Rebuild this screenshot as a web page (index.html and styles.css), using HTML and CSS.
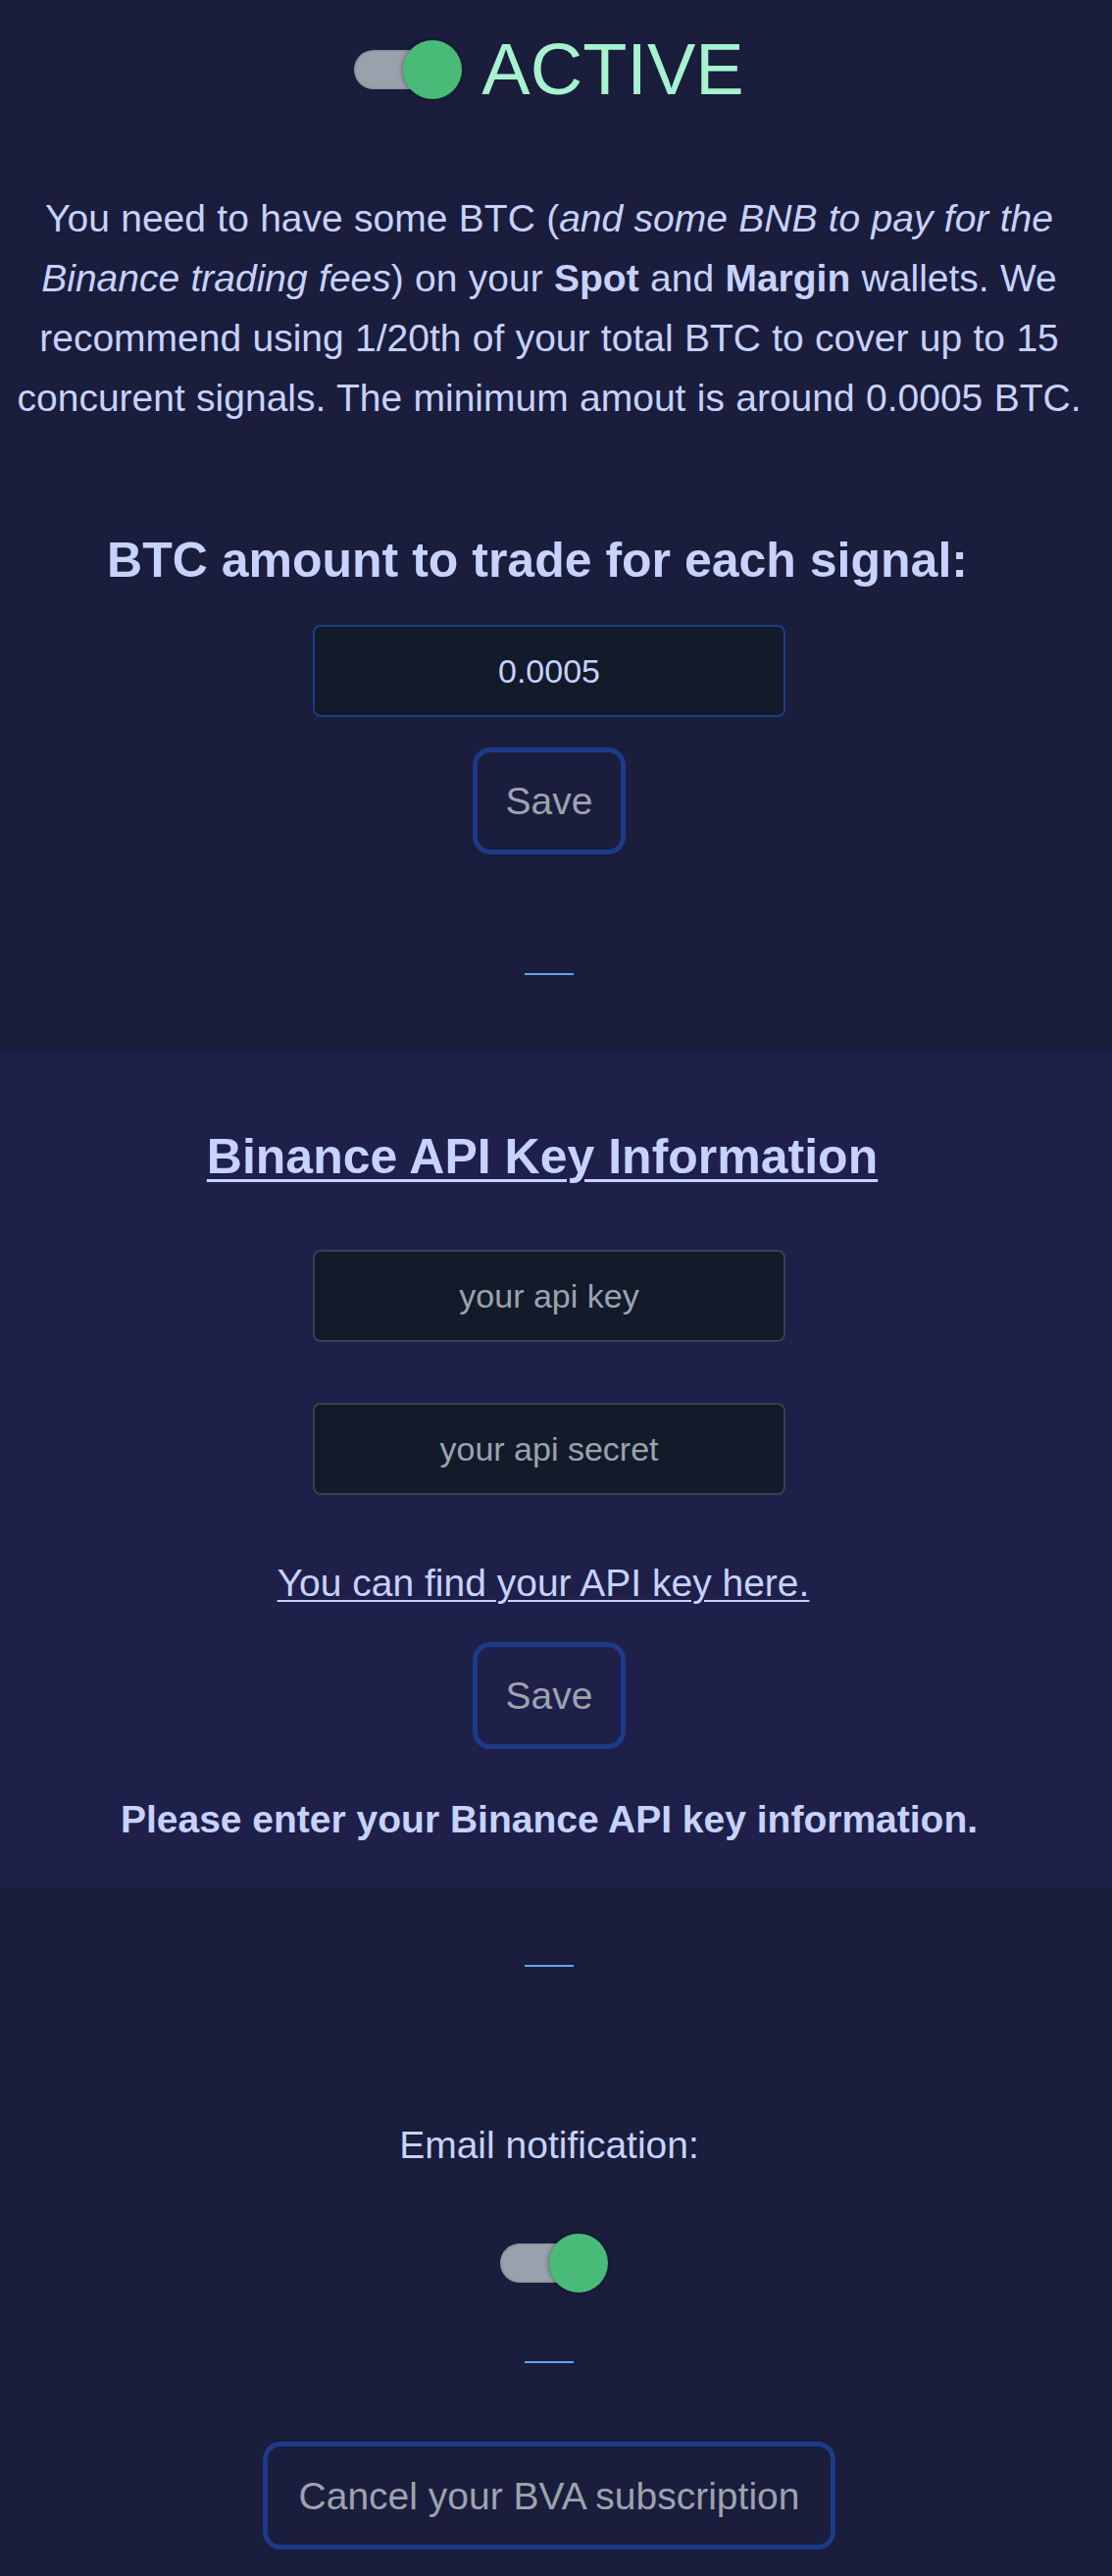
FILE: index.html
```html
<!DOCTYPE html>
<html lang="en">
<head>
<meta charset="utf-8">
<title>BVA settings</title>
<link rel="stylesheet" href="styles.css">
</head>
<body>
<section class="block block-top">
  <div class="status">
    <div class="toggle"><span class="track"></span><span class="knob"></span></div>
    <span class="status-label">ACTIVE</span>
  </div>
  <p class="intro">You need to have some BTC (<em>and some BNB to pay for the Binance trading fees</em>) on your <strong>Spot</strong> and <strong>Margin</strong> wallets. We recommend using 1/20th of your total BTC to cover up to 15 concurent signals. The minimum amout is around 0.0005 BTC.</p>
  <h2 class="amount-title">BTC amount to trade for each signal:</h2>
  <input class="field field-blue amount-field" type="text" value="0.0005">
  <button class="btn save-1" type="button">Save</button>
  <hr class="divider divider-1">
</section>

<section class="block block-api">
  <h2 class="api-title">Binance API Key Information</h2>
  <input class="field field-gray key-field" type="text" placeholder="your api key">
  <input class="field field-gray secret-field" type="text" placeholder="your api secret">
  <a class="api-link" href="#">You can find your API key here.</a>
  <button class="btn save-2" type="button">Save</button>
  <p class="api-note">Please enter your Binance API key information.</p>
</section>

<section class="block block-bottom">
  <hr class="divider divider-2">
  <p class="email-label">Email notification:</p>
  <div class="toggle toggle-email"><span class="track"></span><span class="knob"></span></div>
  <hr class="divider divider-3">
  <button class="btn cancel" type="button">Cancel your BVA subscription</button>
</section>
</body>
</html>
```
FILE: styles.css
```css
* { box-sizing: border-box; }
html, body {
  margin: 0;
  padding: 0;
  background: #1a1d3b;
}
body {
  width: 1134px;
  height: 2626px;
  overflow: hidden;
  font-family: "Liberation Sans", Arial, sans-serif;
  color: #c7d2fe;
}
.block {
  display: flex;
  flex-direction: column;
  align-items: center;
  text-align: center;
  padding-right: 14px;
}
.block-top {
  height: 1073px;
}
.block-api {
  background: #1e2049;
  height: 851px;
  padding-top: 76px;
}
.block-bottom {
  height: 702px;
}

/* status row */
.status {
  margin-top: 34px;
  height: 74px;
  display: flex;
  align-items: center;
  gap: 20px;
}
.toggle {
  position: relative;
  width: 110px;
  height: 60px;
  flex: none;
}
.track {
  position: absolute;
  left: 0;
  top: 10px;
  width: 98px;
  height: 40px;
  border-radius: 20px;
  background: #9aa1ad;
  box-shadow: inset 0 0 3px rgba(0,0,0,0.25);
}
.knob {
  position: absolute;
  left: 50px;
  top: 0;
  width: 60px;
  height: 60px;
  border-radius: 50%;
  background: #48bb78;
  box-shadow: -1px 0 4px rgba(0,0,0,0.35);
}
.status-label {
  font-size: 74px;
  line-height: 74px;
  color: #a7f3d0;
}

/* intro paragraph */
.intro {
  margin: 84px 8px 0;
  width: 1104px;
  font-size: 39px;
  line-height: 61px;
  word-spacing: 0.5px;
}
.intro strong { font-weight: 700; }

.amount-title,
.api-title {
  margin: 0;
  font-size: 50px;
  line-height: 60px;
  font-weight: 700;
}
.amount-title {
  margin-top: 105px;
  padding-right: 24px;
}
.api-title {
  padding-right: 14px;
  text-decoration: underline;
  text-decoration-thickness: 3px;
  text-underline-offset: 6px;
}

/* inputs */
.field {
  display: block;
  width: 482px;
  height: 94px;
  border-radius: 8px;
  background: #131a2a;
  font-family: "Liberation Sans", Arial, sans-serif;
  font-size: 34px;
  text-align: center;
  color: #c7d2fe;
  padding: 0 12px;
  outline: none;
}
.field::placeholder { color: #9ca3af; opacity: 1; }
.field-blue { border: 2px solid #1e3a8a; }
.field-gray { border: 2px solid #374151; }
.amount-field { margin-top: 36px; }
.key-field { margin-top: 65px; }
.secret-field { margin-top: 62px; }

/* buttons */
.btn {
  display: block;
  background: transparent;
  border: 5px solid #1e3a8a;
  border-radius: 18px;
  color: #9ca3af;
  font-family: "Liberation Sans", Arial, sans-serif;
  font-size: 39px;
  line-height: 59px;
  padding: 20px 29px;
  height: 109px;
}
.save-1 { margin-top: 31px; }
.save-2 { margin-top: 31px; }
.cancel { margin-top: 80px; height: 110px; padding: 20px 32px; }

/* dividers */
.divider {
  width: 50px;
  height: 2px;
  border: 0;
  margin: 0;
  background: #60a5fa;
  flex: none;
}
.divider-1 { margin-top: 121px; }
.divider-2 { margin-top: 79px; }
.divider-3 { margin-top: 70px; }

/* api section */
.api-link {
  display: block;
  margin-top: 60px;
  padding-right: 12px;
  font-size: 39px;
  line-height: 59px;
  color: #c7d2fe;
  text-decoration: underline;
  text-decoration-thickness: 2px;
  text-underline-offset: 4px;
}
.api-note {
  margin: 42px 0 0;
  font-size: 39px;
  line-height: 59px;
  font-weight: 700;
}

/* bottom */
.email-label {
  margin: 152px 0 0;
  font-size: 39px;
  line-height: 59px;
}
.toggle-email {
  margin-top: 61px;
  margin-left: 10px;
}
```
